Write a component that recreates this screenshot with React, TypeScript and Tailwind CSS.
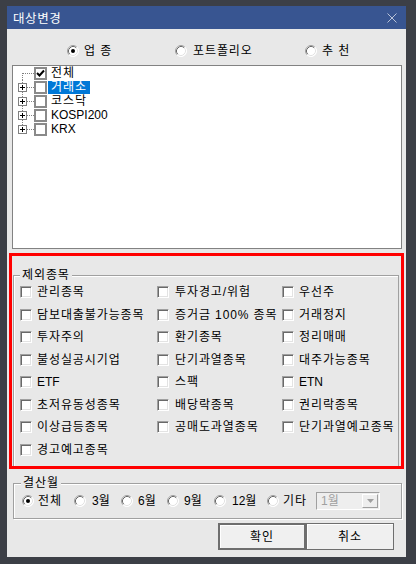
import React from "react";

const Radio = ({ checked = false }: { checked?: boolean }) => (
  <svg width="12" height="12" viewBox="0 0 12 12" className="shrink-0">
    <circle cx="6" cy="6" r="5.5" fill="#ffffff" />
    <path d="M2.11 9.89 A5.5 5.5 0 0 1 9.89 2.11" fill="none" stroke="#a0a0a0" strokeWidth="1" />
    <path d="M2.82 9.18 A4.5 4.5 0 0 1 9.18 2.82" fill="none" stroke="#696969" strokeWidth="1" />
    <path d="M9.89 2.11 A5.5 5.5 0 0 1 2.11 9.89" fill="none" stroke="#ffffff" strokeWidth="1" />
    <path d="M9.18 2.82 A4.5 4.5 0 0 1 2.82 9.18" fill="none" stroke="#e3e3e3" strokeWidth="1" />
    {checked && <circle cx="6" cy="6" r="2" fill="#000000" />}
  </svg>
);

const Check3D = () => (
  <div className="w-[12px] h-[12px] shrink-0 bg-white border border-t-[#a0a0a0] border-l-[#a0a0a0] border-r-white border-b-white shadow-[inset_1px_1px_0_#696969,inset_-1px_-1px_0_#e3e3e3]" />
);

const TreeConnector = ({ first, last, plus }: { first?: boolean; last?: boolean; plus?: boolean }) => (
  <svg width="16" height="14" viewBox="0 0 16 14" className="shrink-0">
    <line x1="4.5" y1={first ? 7 : 0} x2="4.5" y2={last ? 7 : 14} stroke="#808080" strokeWidth="1" strokeDasharray="1 1" />
    <line x1="5" y1="7.5" x2="16" y2="7.5" stroke="#808080" strokeWidth="1" strokeDasharray="1 1" />
    {plus && (
      <g>
        <rect x="0.5" y="3.5" width="8" height="8" fill="#ffffff" stroke="#808080" strokeWidth="1" />
        <line x1="2" y1="7.5" x2="7" y2="7.5" stroke="#000000" strokeWidth="1" />
        <line x1="4.5" y1="5" x2="4.5" y2="10" stroke="#000000" strokeWidth="1" />
      </g>
    )}
  </svg>
);

const TreeCheck = ({ checked = false }: { checked?: boolean }) => (
  <div className="w-[13px] h-[13px] shrink-0 bg-white border-2 border-[#8a8a8a] flex items-center justify-center">
    {checked && (
      <svg width="9" height="9" viewBox="0 0 9 9">
        <polyline points="1,4 3.5,6.5 8,1.5" fill="none" stroke="#000000" strokeWidth="2" />
      </svg>
    )}
  </div>
);

const isAscii = (s: string) => /^[\x00-\x7f]*$/.test(s);

const T = ({ children, className = "" }: { children: string; className?: string }) => (
  <span className={(isAscii(children) ? "" : "tracking-[0.9px] ") + className}>{children}</span>
);

const treeItems = [
  { label: "전체", checked: true, plus: false, selected: false },
  { label: "거래소", checked: false, plus: true, selected: true },
  { label: "코스닥", checked: false, plus: true, selected: false },
  { label: "KOSPI200", checked: false, plus: true, selected: false },
  { label: "KRX", checked: false, plus: true, selected: false },
];

const excl: string[][] = [
  ["관리종목", "투자경고/위험", "우선주"],
  ["담보대출불가능종목", "증거금 100% 종목", "거래정지"],
  ["투자주의", "환기종목", "정리매매"],
  ["불성실공시기업", "단기과열종목", "대주가능종목"],
  ["ETF", "스팩", "ETN"],
  ["초저유동성종목", "배당락종목", "권리락종목"],
  ["이상급등종목", "공매도과열종목", "단기과열예고종목"],
  ["경고예고종목", "", ""],
];

export default function App() {
  return (
    <div className="w-[416px] h-[564px] bg-[#3c3f46] overflow-hidden pt-[6px] font-[family-name:Liberation_Sans,Noto_Sans_CJK_KR,sans-serif] text-[12px] leading-[14px] text-black">
      <div className="ml-[7px] w-[399px]">
        {/* Title bar */}
        <div className="h-[23px] bg-[#385591] flex items-center justify-between pl-[6px] pr-[9px]">
          <span className="text-white text-[12.5px] leading-[14px] tracking-[0.6px] font-[family-name:Noto_Sans_CJK_KR,sans-serif]">대상변경</span>
          <svg width="10" height="10" viewBox="0 0 10 10">
            <line x1="0.5" y1="0.5" x2="9.5" y2="9.5" stroke="#b9c3d8" strokeWidth="1" />
            <line x1="9.5" y1="0.5" x2="0.5" y2="9.5" stroke="#b9c3d8" strokeWidth="1" />
          </svg>
        </div>

        {/* Client */}
        <div className="h-[528px] bg-[#e8e8e8] flex flex-col">
          {/* Radio row */}
          <div className="h-[36px] flex items-start pt-[15px] pl-[60px]">
            <div className="w-[108px] flex items-center gap-[5px]">
              <Radio checked />
              <T>업 종</T>
            </div>
            <div className="w-[130px] flex items-center gap-[6px]">
              <Radio />
              <T>포트폴리오</T>
            </div>
            <div className="flex items-center gap-[5px]">
              <Radio />
              <T>추 천</T>
            </div>
          </div>

          {/* Tree */}
          <div className="ml-[5px] w-[390px] h-[184px] bg-white border border-[#828282] pt-0">
            {treeItems.map((it, i) => (
              <div key={it.label} className="h-[14px] flex items-center pl-[5px]">
                <TreeConnector first={i === 0} last={i === treeItems.length - 1} plus={it.plus} />
                <TreeCheck checked={it.checked} />
                <span
                  className={
                    "ml-[1px] px-[3px] h-[13px] flex items-center " +
                    (it.selected ? "bg-[#0078d7] text-white" : "")
                  }
                >
                  <T>{it.label}</T>
                </span>
              </div>
            ))}
          </div>

          {/* Red highlighted group */}
          <div className="mt-[4px] ml-[2px] w-[395px] h-[216px] border-[3px] border-[#ff0000] flex flex-col">
            <div className="relative mt-[19px] ml-[1px] mr-[2px] flex-1 border border-[#a0a0a0] border-b-0 shadow-[inset_1px_1px_0_#ffffff]">
              <span className="absolute left-[6px] top-[-8px] bg-[#e8e8e8] px-[2px] leading-[14px]">
                <T>제외종목</T>
              </span>
              <div className="pt-[5px] pl-[6px] grid grid-cols-[137px_125px_1fr] auto-rows-[22.5px]">
                {excl.flatMap((row, r) =>
                  row.map((t, c) => (
                    <div key={r + "-" + c} className="flex items-center">
                      {t && (
                        <>
                          <Check3D />
                          <T className={c === 1 ? "ml-[6px]" : "ml-[5px]"}>{t}</T>
                        </>
                      )}
                    </div>
                  ))
                )}
              </div>
            </div>
          </div>

          {/* 결산월 */}
          <div className="relative mt-[14px] ml-[6px] w-[389px] h-[36px] border border-[#a0a0a0] shadow-[inset_1px_1px_0_#ffffff,1px_1px_0_#ffffff]">
            <span className="absolute left-[7px] top-[-8px] bg-[#e8e8e8] px-[2px] leading-[14px]">
              <T>결산월</T>
            </span>
            <div className="pt-[8px] pl-[8px] flex items-center h-[26px]">
              <div className="w-[52px] flex items-center gap-[4px]">
                <Radio checked />
                <T>전체</T>
              </div>
              <div className="w-[47px] flex items-center gap-[6px]">
                <Radio />
                <span>3월</span>
              </div>
              <div className="w-[46px] flex items-center gap-[5px]">
                <Radio />
                <span>6월</span>
              </div>
              <div className="w-[47px] flex items-center gap-[5px]">
                <Radio />
                <span>9월</span>
              </div>
              <div className="w-[53px] flex items-center gap-[6px]">
                <Radio />
                <span>12월</span>
              </div>
              <div className="w-[49px] flex items-center gap-[4px]">
                <Radio />
                <T>기타</T>
              </div>
              <div className="w-[64px] h-[18px] bg-[#eeeeee] border border-t-[#a0a0a0] border-l-[#a0a0a0] border-r-white border-b-white flex items-center justify-between pl-[4px] pr-[1px]">
                <span className="text-[#a0a0a0]">1월</span>
                <div className="w-[16px] h-[14px] bg-[#eeeeee] border border-t-white border-l-white border-r-[#a0a0a0] border-b-[#a0a0a0] flex items-center justify-center">
                  <svg width="7" height="4" viewBox="0 0 7 4">
                    <polygon points="0,0 7,0 3.5,4" fill="#a0a0a0" />
                  </svg>
                </div>
              </div>
            </div>
          </div>

          {/* Buttons */}
          <div className="mt-[4px] ml-[211px] flex">
            <button className="w-[88px] h-[27px] bg-[#f0f0f0] border-2 border-[#6e6e6e] shadow-[inset_1px_1px_0_#ffffff] flex items-center justify-center">
              <T>확인</T>
            </button>
            <button className="w-[88px] h-[27px] bg-[#f0f0f0] border border-[#6e6e6e] shadow-[inset_1px_1px_0_#ffffff] flex items-center justify-center">
              <T>취소</T>
            </button>
          </div>
        </div>
      </div>
    </div>
  );
}
